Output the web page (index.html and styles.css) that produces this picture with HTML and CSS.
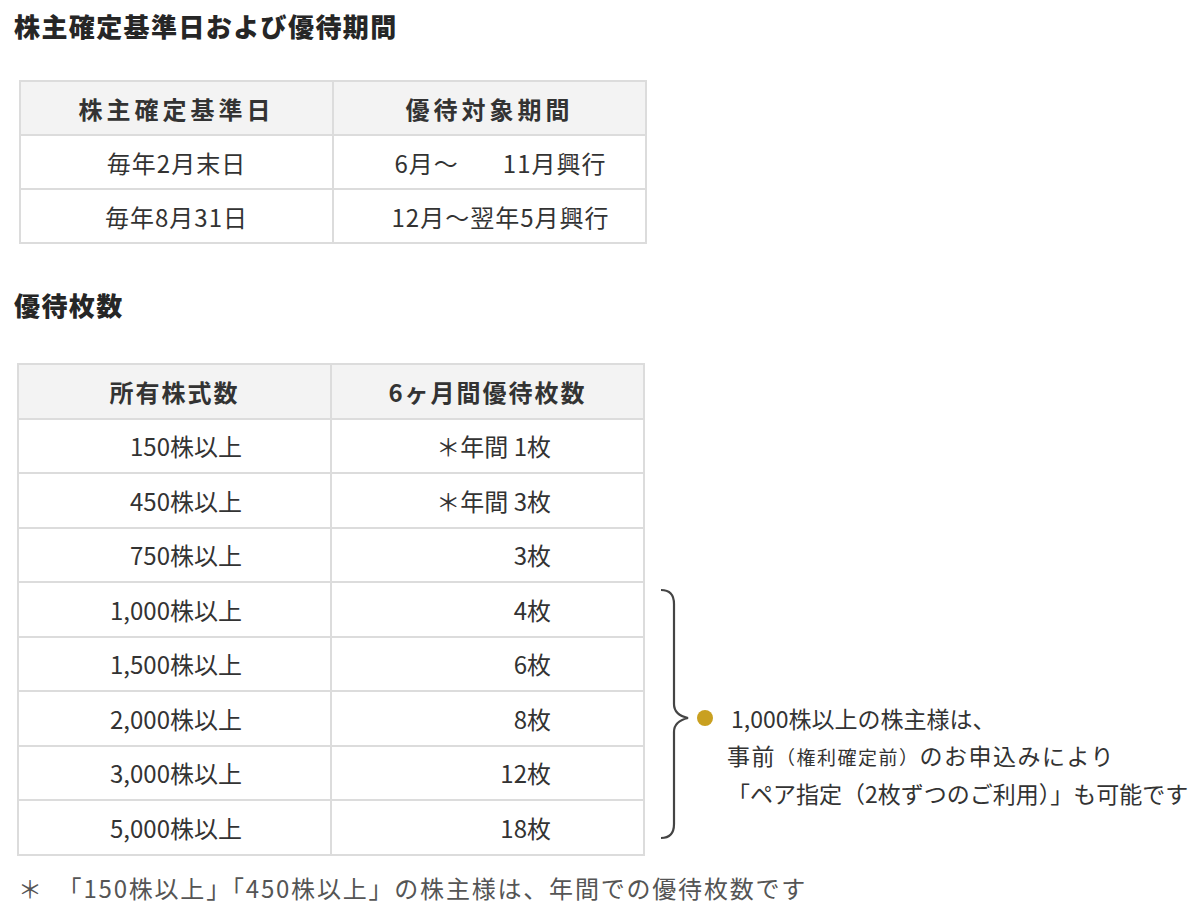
FILE: index.html
```html
<!DOCTYPE html>
<html lang="ja">
<head>
<meta charset="utf-8">
<title>株主確定基準日および優待期間</title>
<link rel="stylesheet" href="styles.css">
</head>
<body>
<div class="page">
  <h2 class="section-title">株主確定基準日および優待期間</h2>
  <table class="grid grid-period">
    <thead>
      <tr><th>株主確定基準日</th><th>優待対象期間</th></tr>
    </thead>
    <tbody>
      <tr><td class="c">毎年2月末日</td><td class="c shift">6月～<span class="gap"></span>11月興行</td></tr>
      <tr><td class="c">毎年8月31日</td><td class="c shift">12月～翌年5月興行</td></tr>
    </tbody>
  </table>

  <h2 class="section-title title-count">優待枚数</h2>
  <div class="count-row">
    <table class="grid grid-count">
      <thead>
        <tr><th>所有株式数</th><th>6ヶ月間優待枚数</th></tr>
      </thead>
      <tbody>
        <tr><td class="r1">150株以上</td><td class="r2">＊年間 1枚</td></tr>
        <tr><td class="r1">450株以上</td><td class="r2">＊年間 3枚</td></tr>
        <tr><td class="r1">750株以上</td><td class="r2">3枚</td></tr>
        <tr><td class="r1">1,000株以上</td><td class="r2">4枚</td></tr>
        <tr><td class="r1">1,500株以上</td><td class="r2">6枚</td></tr>
        <tr><td class="r1">2,000株以上</td><td class="r2">8枚</td></tr>
        <tr><td class="r1">3,000株以上</td><td class="r2">12枚</td></tr>
        <tr><td class="r1">5,000株以上</td><td class="r2">18枚</td></tr>
      </tbody>
    </table>
    <aside class="note">
      <svg class="brace" width="32" height="252" viewBox="0 0 32 252" aria-hidden="true">
        <path d="M2,2 C10,2 15,6 15,16 L15,116 C15,124 20,128 29,130 C20,132 15,136 15,144 L15,236 C15,246 10,250 2,250" fill="none" stroke="#444" stroke-width="2.2"/>
      </svg>
      <div class="note-body">
        <p class="note-line first"><span class="dot"></span>1,000株以上の株主様は、</p>
        <p class="note-line spaced">事前<span class="small">（権利確定前）</span>のお申込みにより</p>
        <p class="note-line">「ペア指定（2枚ずつのご利用）」も可能です</p>
      </div>
    </aside>
  </div>
  <p class="footnote">＊　「150株以上」「450株以上」の株主様は、年間での優待枚数です</p>
</div>
</body>
</html>
```

FILE: styles.css
```css
html, body {
  margin: 0;
  padding: 0;
  background: #ffffff;
}

body {
  font-family: "Noto Sans CJK JP", "Noto Sans", sans-serif;
  color: #333333;
}

.page {
  padding: 8px 0 0 14px;
}

.section-title {
  margin: 0;
  font-size: 26px;
  line-height: 36px;
  letter-spacing: 1.4px;
  font-weight: 900;
  color: #262626;
}

.title-count {
  margin-top: 43px;
}

.grid {
  border-collapse: collapse;
  width: 628px;
  table-layout: fixed;
  font-size: 24px;
}

.grid th,
.grid td {
  border: 2px solid #dcdcdc;
  padding: 0;
  width: 50%;
  vertical-align: middle;
}

.grid th {
  background: #f3f3f3;
  font-weight: bold;
  text-align: center;
  color: #333333;
}

.grid-period {
  margin: 36px 0 0 5px;
}

.grid-period th {
  letter-spacing: 4px;
}

.grid-period td {
  letter-spacing: 1px;
}

.grid-period th,
.grid-period td {
  height: 52px;
}

.c {
  text-align: center;
}

.shift {
  padding-left: 22px !important;
}

.gap {
  display: inline-block;
  width: 44px;
}

.count-row {
  display: flex;
  margin: 40px 0 0 3px;
}

.grid-count th {
  letter-spacing: 2px;
}

.grid-count th,
.grid-count td {
  height: 52.5px;
}

.r1 {
  text-align: right;
  padding-right: 88px !important;
}

.r2 {
  text-align: right;
  padding-right: 92px !important;
}

.note {
  align-self: flex-end;
  display: flex;
  margin: 0 0 16px 14px;
}

.brace {
  display: block;
  flex: none;
}

.note-body {
  margin: 112px 0 0 6px;
  font-size: 23px;
  color: #333333;
}

.note-line {
  margin: 0;
  line-height: 37px;
  padding-left: 30px;
  white-space: nowrap;
}

.note-line.first {
  display: flex;
  align-items: center;
  padding-left: 0;
}

.note-line.spaced {
  letter-spacing: 1.5px;
}

.dot {
  display: inline-block;
  width: 16px;
  height: 16px;
  border-radius: 50%;
  background: #c9a020;
  margin-right: 18px;
  flex: none;
}

.small {
  font-size: 19px;
}

.footnote {
  margin: 14px 0 0 4px;
  font-size: 24px;
  line-height: 36px;
  letter-spacing: 1.8px;
  color: #555555;
}
```
